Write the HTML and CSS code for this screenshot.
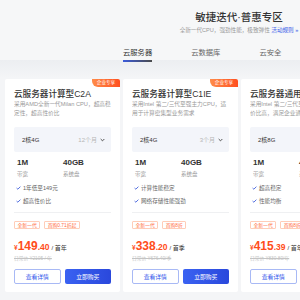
FILE: index.html
```html
<!DOCTYPE html>
<html lang="zh-CN">

<head>
    <meta charset="UTF-8">
    <meta name="viewport" content="width=device-width, initial-scale=1.0">
    <title>敏捷迭代·普惠专区</title>
    <link rel="stylesheet" href="styles.css">
</head>

<body>
    <header class="hero">
        <div class="hero-text">
            <h1>敏捷迭代·普惠专区</h1>
            <p>全新一代CPU，强劲性能，极致弹性 <a href="#">活动规则 »</a></p>
        </div>
        <nav class="tabs">
            <span class="tab active">云服务器</span>
            <span class="tab">云数据库</span>
            <span class="tab">云安全</span>
        </nav>
    </header>

    <section class="cards">
        <div class="card">
            <span class="badge">企业专享</span>
            <h2>云服务器计算型C2A</h2>
            <p class="desc">采用AMD全新一代Milan CPU，超高稳定性，超高性价比</p>
            <div class="select">
                <span class="spec-name">2核4G</span>
                <span class="period">12个月</span>
                <svg class="chev" viewBox="0 0 6 4"><polyline points="0.8,0.8 3,3 5.2,0.8" /></svg>
            </div>
            <div class="specs">
                <div><b>1M</b><span>带宽</span></div>
                <div><b>40GB</b><span>系统盘</span></div>
            </div>
            <ul class="checks">
                <li><svg viewBox="0 0 6 5"><polyline points="0.6,2.6 2.2,4 5.4,0.8" /></svg>1年低至149元</li>
                <li><svg viewBox="0 0 6 5"><polyline points="0.6,2.6 2.2,4 5.4,0.8" /></svg>超高性价比</li>
            </ul>
            <div class="tags"><span>全新一代</span><span>首购0.71折起</span></div>
            <div class="price">¥<strong>149</strong><em>.40</em><small>/ 首年</small></div>
            <div class="old">日常价 ¥2105 / 年</div>
            <div class="actions">
                <button class="ghost">查看详情</button>
                <button class="buy">立即购买</button>
            </div>
        </div>

        <div class="card">
            <span class="badge">企业专享</span>
            <h2>云服务器计算型C1IE</h2>
            <p class="desc">采用Intel 第二/三代至强主力CPU，适用于计算密集型业务需求</p>
            <div class="select">
                <span class="spec-name">2核4G</span>
                <span class="period">3个月</span>
                <svg class="chev" viewBox="0 0 6 4"><polyline points="0.8,0.8 3,3 5.2,0.8" /></svg>
            </div>
            <div class="specs">
                <div><b>1M</b><span>带宽</span></div>
                <div><b>40GB</b><span>系统盘</span></div>
            </div>
            <ul class="checks">
                <li><svg viewBox="0 0 6 5"><polyline points="0.6,2.6 2.2,4 5.4,0.8" /></svg>计算性能稳定</li>
                <li><svg viewBox="0 0 6 5"><polyline points="0.6,2.6 2.2,4 5.4,0.8" /></svg>网络存储性能强劲</li>
            </ul>
            <div class="tags"><span>全新一代</span><span>首购8折</span></div>
            <div class="price">¥<strong>338</strong><em>.20</em><small>/ 首季</small></div>
            <div class="old">日常价 ¥676.40/季</div>
            <div class="actions">
                <button class="ghost">查看详情</button>
                <button class="buy">立即购买</button>
            </div>
        </div>

        <div class="card">
            <h2>云服务器通用型S5</h2>
            <p class="desc">采用Intel 第二/三代至强主力CPU，性价比高，满足企业通用业务需求</p>
            <div class="select">
                <span class="spec-name">2核8G</span>
                <span class="period">3个月</span>
                <svg class="chev" viewBox="0 0 6 4"><polyline points="0.8,0.8 3,3 5.2,0.8" /></svg>
            </div>
            <div class="specs">
                <div><b>1M</b><span>带宽</span></div>
                <div><b>40GB</b><span>系统盘</span></div>
            </div>
            <ul class="checks">
                <li><svg viewBox="0 0 6 5"><polyline points="0.6,2.6 2.2,4 5.4,0.8" /></svg>超高稳定</li>
                <li><svg viewBox="0 0 6 5"><polyline points="0.6,2.6 2.2,4 5.4,0.8" /></svg>性能均衡</li>
            </ul>
            <div class="tags"><span>全新一代</span><span>首购8折</span></div>
            <div class="price">¥<strong>415</strong><em>.39</em><small>/ 首年</small></div>
            <div class="old">日常价 ¥830.80/年</div>
            <div class="actions">
                <button class="ghost">查看详情</button>
                <button class="buy">立即购买</button>
            </div>
        </div>
    </section>
</body>

</html>
```

FILE: styles.css
```css
body {
    margin: 0;
    padding: 0;
    width: 300px;
    height: 300px;
    overflow: hidden;
    font-family: 'Liberation Sans', 'Noto Sans CJK SC', sans-serif;
    background-color: #f4f5f7;
    color: #333;
}

.hero {
    height: 60px;
    background-color: #f6f7f8;
}

.hero-text {
    margin-left: 178px;
    width: 122px;
    padding-top: 11px;
    text-align: center;
}

.hero-text h1 {
    margin: 0;
    font-size: 10.5px;
    line-height: 13px;
    font-weight: 500;
    color: #333;
}

.hero-text p {
    margin: 2px 0 0;
    font-size: 5.6px;
    line-height: 8px;
    color: #999;
    white-space: nowrap;
}

.hero-text a {
    color: #3b5fe8;
    text-decoration: none;
}

.tabs {
    display: flex;
    gap: 39px;
    padding-left: 123px;
    margin-top: 2px;
}

.tab {
    padding: 12px 0 4px;
    font-size: 7.3px;
    line-height: 10px;
    color: #666;
}

.tab.active {
    color: #333;
    background: linear-gradient(90deg, #3b5bdb, #4a4a4a) no-repeat bottom / 100% 2px;
}

.cards {
    display: flex;
    gap: 3px;
    padding: 19px 0 0 5px;
    height: 240px;
    box-sizing: border-box;
    overflow: hidden;
    background: linear-gradient(#eceef1, #f4f5f7 18px);
}

.card {
    position: relative;
    flex-shrink: 0;
    width: 115px;
    box-sizing: border-box;
    height: 213px;
    padding: 10px 9px 9px;
    background-color: #fff;
    border-radius: 2px;
}

.badge {
    position: absolute;
    top: 0;
    right: 0;
    width: 28px;
    height: 8px;
    line-height: 8px;
    text-align: center;
    font-size: 4.6px;
    color: #fff;
    background: linear-gradient(90deg, #ff8c4a, #ff4f1f);
    border-radius: 0 2px 0 6px;
}

.card h2 {
    margin: 0;
    font-size: 8.6px;
    line-height: 11px;
    font-weight: 500;
    color: #333;
    white-space: nowrap;
}

.desc {
    margin: 0;
    height: 18px;
    font-size: 5.7px;
    line-height: 9px;
    color: #999;
    overflow: hidden;
}

.select {
    display: flex;
    align-items: center;
    height: 25px;
    margin-top: 9px;
    padding: 0 6px 0 8px;
    background-color: #f3f5fa;
    border-radius: 2px;
    font-size: 6px;
}

.spec-name {
    flex: 1;
    color: #333;
}

.period {
    color: #b5b5b5;
}

.chev {
    width: 5px;
    height: 4px;
    margin-left: 3px;
    fill: none;
    stroke: #444;
    stroke-width: 1.1;
}

.specs {
    display: flex;
    margin-top: 6px;
    padding-left: 3px;
}

.specs div {
    display: flex;
    flex-direction: column;
    width: 46px;
}

.specs b {
    font-size: 8px;
    line-height: 10px;
    font-weight: 600;
    color: #333;
}

.specs span {
    margin-top: 3px;
    font-size: 5.5px;
    line-height: 7px;
    color: #999;
}

.checks {
    list-style: none;
    margin: 6px 0 0;
    padding: 0 0 7px 2px;
    border-bottom: 1px solid #eff0f2;
}

.checks li {
    display: flex;
    align-items: center;
    height: 8px;
    font-size: 5.6px;
    color: #666;
}

.checks li + li {
    margin-top: 5px;
}

.checks svg {
    width: 5px;
    height: 4px;
    margin-right: 2px;
    fill: none;
    stroke: #3b5bdb;
    stroke-width: 1.1;
}

.tags {
    display: flex;
    gap: 4px;
    margin-top: 8px;
}

.tags span {
    height: 8px;
    box-sizing: border-box;
    padding: 0 2.5px;
    line-height: 7px;
    font-size: 4.8px;
    color: #ff6a3d;
    border: 0.5px solid #ffcdb8;
    border-radius: 1px;
}

.price {
    margin-top: 10px;
    height: 14px;
    line-height: 14px;
    font-size: 6.5px;
    color: #ff4d1a;
    font-weight: 600;
    white-space: nowrap;
}

.price strong {
    font-size: 12px;
    font-weight: 700;
}

.price em {
    font-style: normal;
    font-size: 8.5px;
    font-weight: 700;
}

.price small {
    margin-left: 2px;
    font-size: 6px;
    font-weight: 400;
    color: #333;
}

.old {
    margin-top: 1.5px;
    font-size: 4.8px;
    line-height: 7px;
    color: #c4c4c4;
    text-decoration: line-through;
}

.actions {
    display: grid;
    grid-template-columns: 1fr 1fr;
    gap: 4px;
    margin-top: 7.5px;
}

.actions button {
    height: 15px;
    padding: 0;
    font-family: inherit;
    font-size: 5.8px;
    border-radius: 2px;
    cursor: pointer;
}

.ghost {
    color: #2f54eb;
    background-color: #fff;
    border: 0.8px solid #a8b9f5;
}

.buy {
    color: #fff;
    border: none;
    background: linear-gradient(90deg, #3a62f2, #2a48dc);
}
```
